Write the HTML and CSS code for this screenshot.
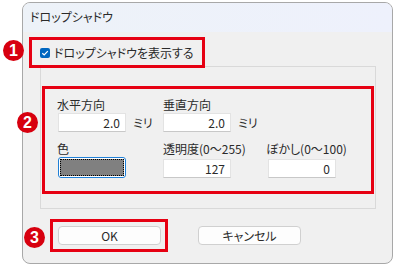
FILE: index.html
```html
<!DOCTYPE html>
<html lang="ja">
<head>
  <meta charset="UTF-8">
  <title>ドロップシャドウ</title>
  <link rel="stylesheet" href="styles.css">
</head>
<body>

<div class="dialog">
  <div class="titlebar">ドロップシャドウ</div>

  <div class="mark mark-check">
    <span class="checkbox">
      <svg width="10" height="10" viewBox="0 0 10 10"><path d="M2.3 5.2 L4.2 7 L7.8 3.2" fill="none" stroke="#fff" stroke-width="1.2"/></svg>
    </span>
    <span>ドロップシャドウを表示する</span>
  </div>

  <div class="group">
    <div class="mark mark-fields">
      <div class="field">
        <div class="label">水平方向</div>
        <div class="line"><input class="num first" value="2.0"><span class="unit">ミリ</span></div>
      </div>
      <div class="field">
        <div class="label">垂直方向</div>
        <div class="line"><input class="num" value="2.0"><span class="unit">ミリ</span></div>
      </div>
      <div class="field"></div>

      <div class="field">
        <div class="label">色</div>
        <button class="color-btn first"><span class="swatch"></span></button>
      </div>
      <div class="field">
        <div class="label">透明度(0～255)</div>
        <input class="num low" value="127">
      </div>
      <div class="field">
        <div class="label">ぼかし(0～100)</div>
        <input class="num low last" value="0">
      </div>
    </div>
  </div>

  <div class="buttons">
    <div class="mark mark-ok">
      <button class="btn">OK</button>
    </div>
    <button class="btn">キャンセル</button>
  </div>
</div>

<span class="badge badge-1">1</span>
<span class="badge badge-2">2</span>
<span class="badge badge-3">3</span>

</body>
</html>
```

FILE: styles.css
```css
body {
  margin: 0;
  background: #fff;
  font-family: "Noto Sans CJK JP", "Noto Sans", sans-serif;
  font-size: 12px;
  color: #2a2a2a;
  font-feature-settings: "palt";
}
.dialog {
  margin: 2px 0 0 22px;
  width: 369px;
  height: 260px;
  border: 1px solid #a8a8a8;
  border-radius: 8px;
  background: #f0f0f0;
  overflow: hidden;
}
.titlebar {
  height: 29px;
  line-height: 27px;
  padding-left: 7px;
  background: linear-gradient(to right, #edf2f8, #eef1fc);
}
.mark {
  border: 3px solid #e60012;
}
.mark-check {
  position: relative;
  z-index: 1;
  margin: 5px 0 0 6px;
  width: 162px;
  height: 25px;
  display: flex;
  align-items: center;
  gap: 4px;
  padding-left: 8px;
  box-sizing: content-box;
}
.checkbox {
  width: 10px;
  height: 10px;
  border-radius: 2px;
  background: #0067c0;
  display: flex;
}
.group {
  margin: -2px 0 0 17px;
  width: 334px;
  height: 141px;
  border: 1px solid #d9d9d9;
}
.mark-fields {
  margin: 19px 0 0 1px;
  width: 314px;
  height: 94px;
  padding: 8px 0 0 12px;
  display: grid;
  grid-template-columns: 106px 103px auto;
  grid-template-rows: 35px auto;
  row-gap: 9px;
}
.label {
  height: 16px;
  line-height: 16px;
}
.line {
  display: flex;
  align-items: center;
  margin-top: 0;
}
.num {
  width: 68px;
  height: 19px;
  box-sizing: border-box;
  border: 1px solid #e3e3e3;
  border-bottom-color: #c8c8c8;
  background: #fff;
  text-align: right;
  padding: 0 5px 0 0;
  font: inherit;
  color: #2a2a2a;
}
.num.low {
  margin-top: 2px;
}
.first {
  margin-left: 1px;
}
.last {
  margin-left: 2px;
}
.unit {
  margin-left: 7px;
}
.color-btn {
  display: block;
  width: 68px;
  height: 21px;
  padding: 1px;
  border: 1px solid #1f7fd6;
  border-radius: 3px;
  background: #fff;
}
.swatch {
  display: block;
  height: 100%;
  border: 1px dotted #000;
  background: #808080;
  box-sizing: border-box;
}
.buttons {
  display: flex;
  align-items: center;
  gap: 30px;
  margin: 10px 0 0 27px;
}
.mark-ok {
  padding: 4px 4px 4px 5px;
}
.btn {
  width: 103px;
  height: 19px;
  border: 1px solid #d0d0d0;
  border-radius: 4px;
  background: #fdfdfd;
  font: inherit;
  color: #2a2a2a;
  padding: 0;
}
.badge {
  position: absolute;
  width: 21px;
  height: 21px;
  border-radius: 50%;
  background: #d7000f;
  color: #fff;
  font-family: "Liberation Sans", sans-serif;
  font-weight: bold;
  font-size: 16px;
  line-height: 21px;
  text-align: center;
}
.badge-1 { left: 3px; top: 40px; }
.badge-2 { left: 17px; top: 112px; }
.badge-3 { left: 24px; top: 227px; }
```
